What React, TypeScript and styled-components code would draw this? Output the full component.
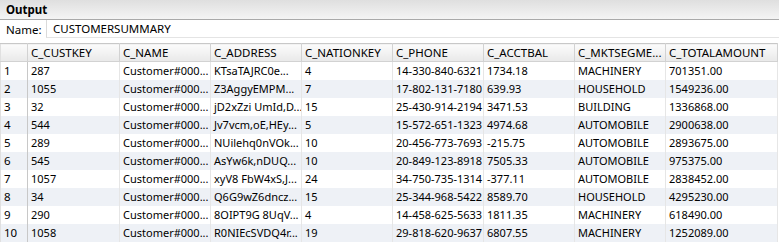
import React from "react";
import styled, { createGlobalStyle } from "styled-components";

const Global = createGlobalStyle`
  html, body { margin: 0; padding: 0; background: #ffffff; }
  body { font-family: "Noto Sans", "Open Sans", sans-serif; font-size: 11.5px; color: #000; }
`;

const Panel = styled.div`
  width: 779px;
  height: 242px;
  overflow: hidden;
  background: #fff;
  display: flex;
  flex-direction: column;
`;

const TitleBar = styled.div`
  height: 19px;
  border-bottom: 1px solid #a9a9a9;
  background: linear-gradient(#dfdfdf, #f4f4f4);
  display: flex;
  align-items: center;
  padding-left: 6px;
  font-weight: bold;
  font-size: 11.5px;
  line-height: 19px;
`;

const NameRow = styled.div`
  height: 20px;
  display: flex;
  align-items: stretch;
`;

const NameLabel = styled.label`
  width: 40px;
  padding-left: 6px;
  display: flex;
  align-items: center;
  font-size: 11.5px;
`;

const NameInput = styled.div`
  flex: 1;
  border-left: 1px solid #dadada;
  border-bottom: 1px solid #e4e4e4;
  padding-left: 6px;
  display: flex;
  align-items: center;
  font-size: 11.5px;
`;

const TableWrap = styled.div`
  margin-top: 5px;
`;

const Table = styled.table`
  border-collapse: collapse;
  table-layout: fixed;
  width: 777px;
  border-top: 1px solid #c8c8c8;
  border-left: 1px solid #e0e0e0;
`;

const HeadCell = styled.th`
  height: 17px;
  padding: 0 0 0 3px;
  text-align: left;
  font-weight: normal;
  white-space: nowrap;
  overflow: hidden;
  background: linear-gradient(#fbfbfb, #e9e9e9);
  border-right: 1px solid #d2d2d2;
  border-bottom: 1px solid #d2d2d2;
  line-height: 17px;
  font-size: 11.5px;
`;

const Row = styled.tr<{ $striped: boolean }>`
  background: ${(p) => (p.$striped ? "#eef1f6" : "#ffffff")};
`;

const Cell = styled.td`
  height: 18px;
  padding: 0 0 0 3px;
  white-space: nowrap;
  overflow: hidden;
  line-height: 18px;
  font-size: 11px;
  border-right: 1px solid #e6e6e6;
`;

const IndexCell = styled(Cell)`
  padding-left: 3px;
  font-size: 11.5px;
  border-right: 1px solid #c8c8c8;
`;

const widths = [27, 92, 91, 91, 91, 91, 91, 91, 112];
const headers = [
  "",
  "C_CUSTKEY",
  "C_NAME",
  "C_ADDRESS",
  "C_NATIONKEY",
  "C_PHONE",
  "C_ACCTBAL",
  "C_MKTSEGME...",
  "C_TOTALAMOUNT",
];

const rows: string[][] = [
  ["287", "Customer#000...", "KTsaTAJRC0e...", "4", "14-330-840-6321", "1734.18", "MACHINERY", "701351.00"],
  ["1055", "Customer#000...", "Z3AggyEMPM...", "7", "17-802-131-7180", "639.93", "HOUSEHOLD", "1549236.00"],
  ["32", "Customer#000...", "jD2xZzi UmId,D...", "15", "25-430-914-2194", "3471.53", "BUILDING", "1336868.00"],
  ["544", "Customer#000...", "Jv7vcm,oE,HEy...", "5", "15-572-651-1323", "4974.68", "AUTOMOBILE", "2900638.00"],
  ["289", "Customer#000...", "NUilehq0nVOk...", "10", "20-456-773-7693", "-215.75", "AUTOMOBILE", "2893675.00"],
  ["545", "Customer#000...", "AsYw6k,nDUQ...", "10", "20-849-123-8918", "7505.33", "AUTOMOBILE", "975375.00"],
  ["1057", "Customer#000...", "xyV8 FbW4xS,J...", "24", "34-750-735-1314", "-377.11", "AUTOMOBILE", "2838452.00"],
  ["34", "Customer#000...", "Q6G9wZ6dncz...", "15", "25-344-968-5422", "8589.70", "HOUSEHOLD", "4295230.00"],
  ["290", "Customer#000...", "8OIPT9G 8UqV...", "4", "14-458-625-5633", "1811.35", "MACHINERY", "618490.00"],
  ["1058", "Customer#000...", "R0NIEcSVDQ4r...", "19", "29-818-620-9637", "6807.55", "MACHINERY", "1252089.00"],
];

export default function App() {
  return (
    <>
      <Global />
      <Panel>
        <TitleBar>Output</TitleBar>
        <NameRow>
          <NameLabel>Name:</NameLabel>
          <NameInput>CUSTOMERSUMMARY</NameInput>
        </NameRow>
        <TableWrap>
          <Table>
            <colgroup>
              {widths.map((w, i) => (
                <col key={i} style={{ width: w }} />
              ))}
            </colgroup>
            <thead>
              <tr>
                {headers.map((h, i) => (
                  <HeadCell key={i}>{h}</HeadCell>
                ))}
              </tr>
            </thead>
            <tbody>
              {rows.map((r, i) => (
                <Row key={i} $striped={i % 2 === 1}>
                  <IndexCell>{i + 1}</IndexCell>
                  {r.map((c, j) => (
                    <Cell key={j}>{c}</Cell>
                  ))}
                </Row>
              ))}
            </tbody>
          </Table>
        </TableWrap>
      </Panel>
    </>
  );
}
